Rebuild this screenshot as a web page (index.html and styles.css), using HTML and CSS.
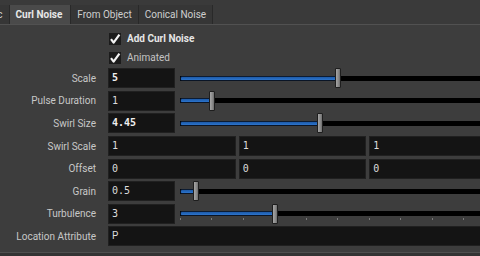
FILE: index.html
```html
<!DOCTYPE html>
<html lang="en">
<head>
<meta charset="UTF-8" />
<title>Curl Noise</title>
<link rel="stylesheet" href="styles.css">
</head>
<body>

<div class="tabs">
  <div class="tab tab-cut">Basic</div>
  <div class="tab active">Curl Noise</div>
  <div class="tab">From Object</div>
  <div class="tab">Conical Noise</div>
</div>

<div class="parms">
  <div class="toggle-row">
    <span class="check"><svg width="12" height="12" viewBox="0 0 12 12"><path d="M2 6.2 L4.6 9.6 L10.4 1.6" fill="none" stroke="#f2f2f2" stroke-width="2.2" stroke-linejoin="round"/></svg></span>
    <span class="toggle-label strong">Add Curl Noise</span>
  </div>
  <div class="toggle-row">
    <span class="check"><svg width="12" height="12" viewBox="0 0 12 12"><path d="M2 6.2 L4.6 9.6 L10.4 1.6" fill="none" stroke="#f2f2f2" stroke-width="2.2" stroke-linejoin="round"/></svg></span>
    <span class="toggle-label">Animated</span>
  </div>

  <div class="row">
    <label>Scale</label>
    <div class="field num changed">5</div>
    <div class="slider"><div class="fill" style="width:157.5px"></div><div class="handle" style="left:154.5px"></div></div>
  </div>
  <div class="row">
    <label>Pulse Duration</label>
    <div class="field num">1</div>
    <div class="slider"><div class="fill" style="width:31.5px"></div><div class="handle" style="left:28.5px"></div></div>
  </div>
  <div class="row">
    <label>Swirl Size</label>
    <div class="field num changed">4.45</div>
    <div class="slider"><div class="fill" style="width:140.2px"></div><div class="handle" style="left:137.2px"></div></div>
  </div>
  <div class="row">
    <label>Swirl Scale</label>
    <div class="vector">
      <div class="field num">1</div>
      <div class="field num">1</div>
      <div class="field num">1</div>
    </div>
  </div>
  <div class="row">
    <label>Offset</label>
    <div class="vector">
      <div class="field num">0</div>
      <div class="field num">0</div>
      <div class="field num">0</div>
    </div>
  </div>
  <div class="row">
    <label>Grain</label>
    <div class="field num">0.5</div>
    <div class="slider"><div class="fill" style="width:15.75px"></div><div class="handle" style="left:12.75px"></div></div>
  </div>
  <div class="row">
    <label>Turbulence</label>
    <div class="field num">3</div>
    <div class="slider ticks"><div class="fill" style="width:94.5px"></div><div class="handle" style="left:91.5px"></div></div>
  </div>
  <div class="row">
    <label>Location Attribute</label>
    <div class="field text wide">P</div>
  </div>
</div>

<div class="footer"></div>

</body>
</html>
```

FILE: styles.css
```css
html,
body {
  margin: 0;
  height: 256px;
  overflow: hidden;
}
body {
  width: 500px;
  background: #3d3d3d;
  font-family: Roboto, "Liberation Sans", sans-serif;
  font-size: 10px;
  color: #c8c8c8;
}

/* TABS */
.tabs {
  height: 24px;
  display: flex;
  align-items: flex-end;
  background: #3a3a3a;
  border-bottom: 1px solid #515151;
}
.tab {
  height: 19px;
  line-height: 19px;
  padding: 0 6px;
  background: #363636;
  border-right: 1px solid #292929;
  color: #cfcfcf;
  box-sizing: border-box;
  white-space: nowrap;
}
.tab-cut {
  margin-left: -28px;
}
.tab.active {
  background: #4a4a4a;
  color: #e8e8e8;
  font-weight: 700;
  padding: 0 8px 0 6px;
}

/* PARAMETERS */
.parms {
  padding-top: 4px;
}
.toggle-row {
  height: 19px;
  display: flex;
  align-items: center;
  padding-left: 109px;
  gap: 6px;
}
.check {
  width: 12px;
  height: 12px;
  background: #1b1b1b;
  display: block;
}
.check svg {
  display: block;
}
.toggle-label {
  color: #c4c4c4;
}
.toggle-label.strong {
  color: #e6e6e6;
  font-weight: 700;
}

.row {
  height: 22.6px;
  display: flex;
  align-items: center;
}
.row label {
  width: 96px;
  margin-right: 12px;
  text-align: right;
  white-space: nowrap;
}
.field {
  height: 20px;
  line-height: 18px;
  box-sizing: border-box;
  background: #141414;
  border: 1px solid #202020;
  padding-left: 3px;
  color: #dcdcdc;
  flex-shrink: 0;
}
.field.num {
  font-family: "DejaVu Sans Mono", "Liberation Mono", monospace;
  width: 67px;
}
.field.changed {
  font-weight: 700;
  color: #f0f0f0;
}
.field.wide {
  width: 389px;
}
.vector {
  display: grid;
  grid-template-columns: repeat(3, 1fr);
  gap: 3px;
  width: 389px;
}
.vector .field.num {
  width: auto;
}

/* SLIDERS */
.slider {
  position: relative;
  margin-left: 5px;
  width: 315px;
  height: 20px;
  flex-shrink: 0;
  background: linear-gradient(#000, #000) 0 7.5px / 100% 5px no-repeat;
}
.slider.ticks {
  background:
    linear-gradient(#000, #000) 0 7.5px / 100% 5px no-repeat,
    repeating-linear-gradient(to right, #7a7a7a 0 1px, transparent 1px 31.5px) 0 14px / 100% 2px no-repeat;
}
.fill {
  position: absolute;
  left: 0;
  top: 7.5px;
  height: 5px;
  box-sizing: border-box;
  border-top: 1px solid #0c1c33;
  border-bottom: 1px solid #0a1526;
  border-left: 1px solid #0a1526;
  border-radius: 2px 0 0 2px;
  background: linear-gradient(#1d5aa8, #2c74cc);
}
.handle {
  position: absolute;
  top: 0;
  width: 6px;
  height: 20px;
  box-sizing: border-box;
  border: 1px solid #1e1e1e;
  border-radius: 1px;
  background: linear-gradient(to right, #a6a6a6, #8a8a8a 60%, #6e6e6e);
}

.footer {
  margin-top: 4px;
  border-top: 1px solid #4f4f4f;
  background: #333;
  height: 10px;
}
```
